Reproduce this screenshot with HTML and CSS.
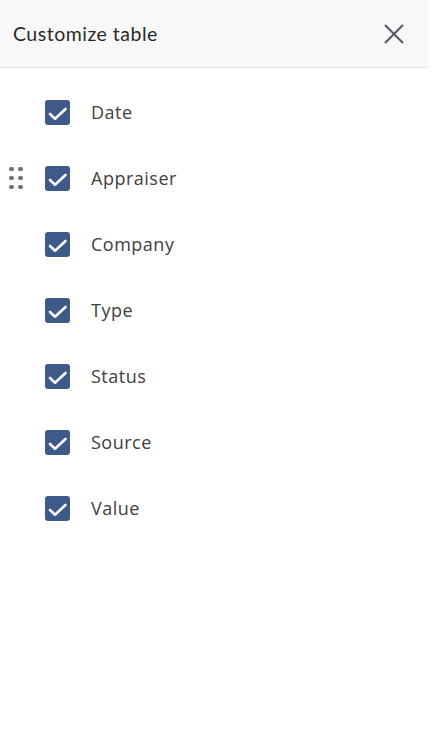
FILE: index.html
```html
<!DOCTYPE html>
<html lang="en">
<head>
    <meta charset="UTF-8">
    <meta name="viewport" content="width=device-width, initial-scale=1.0">
    <title>Customize table</title>
    <link rel="stylesheet" href="styles.css">
</head>
<body>
    <div class="panel">
        <div class="panel-header">
            <h1 class="panel-title">Customize table</h1>
            <button class="close-btn" aria-label="Close">
                <svg width="20" height="20" viewBox="0 0 20 20">
                    <path d="M1 1 L19 19 M19 1 L1 19" stroke="#5b5266" stroke-width="2" fill="none"/>
                </svg>
            </button>
        </div>

        <ul class="columns">
            <li class="column-item">
                <span class="drag"></span>
                <span class="check"><svg viewBox="0 0 25 25"><path d="M5 14 L10 18.7 L20.5 9" stroke="#fff" stroke-width="2.6" fill="none" stroke-linecap="round" stroke-linejoin="round"/></svg></span>
                <span class="label">Date</span>
            </li>
            <li class="column-item">
                <span class="drag visible">
                    <i></i><i></i><i></i><i></i><i></i><i></i>
                </span>
                <span class="check"><svg viewBox="0 0 25 25"><path d="M5 14 L10 18.7 L20.5 9" stroke="#fff" stroke-width="2.6" fill="none" stroke-linecap="round" stroke-linejoin="round"/></svg></span>
                <span class="label">Appraiser</span>
            </li>
            <li class="column-item">
                <span class="drag"></span>
                <span class="check"><svg viewBox="0 0 25 25"><path d="M5 14 L10 18.7 L20.5 9" stroke="#fff" stroke-width="2.6" fill="none" stroke-linecap="round" stroke-linejoin="round"/></svg></span>
                <span class="label">Company</span>
            </li>
            <li class="column-item">
                <span class="drag"></span>
                <span class="check"><svg viewBox="0 0 25 25"><path d="M5 14 L10 18.7 L20.5 9" stroke="#fff" stroke-width="2.6" fill="none" stroke-linecap="round" stroke-linejoin="round"/></svg></span>
                <span class="label">Type</span>
            </li>
            <li class="column-item">
                <span class="drag"></span>
                <span class="check"><svg viewBox="0 0 25 25"><path d="M5 14 L10 18.7 L20.5 9" stroke="#fff" stroke-width="2.6" fill="none" stroke-linecap="round" stroke-linejoin="round"/></svg></span>
                <span class="label">Status</span>
            </li>
            <li class="column-item">
                <span class="drag"></span>
                <span class="check"><svg viewBox="0 0 25 25"><path d="M5 14 L10 18.7 L20.5 9" stroke="#fff" stroke-width="2.6" fill="none" stroke-linecap="round" stroke-linejoin="round"/></svg></span>
                <span class="label">Source</span>
            </li>
            <li class="column-item">
                <span class="drag"></span>
                <span class="check"><svg viewBox="0 0 25 25"><path d="M5 14 L10 18.7 L20.5 9" stroke="#fff" stroke-width="2.6" fill="none" stroke-linecap="round" stroke-linejoin="round"/></svg></span>
                <span class="label">Value</span>
            </li>
        </ul>
    </div>
</body>
</html>
```

FILE: styles.css
```css
body {
    margin: 0;
    background: #fff;
    font-family: 'Open Sans', sans-serif;
}
.panel {
    width: 428px;
}
.panel-header {
    height: 67px;
    background-color: #f8f8f8;
    border-bottom: 1px solid #e2e2e2;
    display: flex;
    justify-content: space-between;
    align-items: center;
    padding: 0 24px 0 13px;
}
.panel-title {
    margin: 0;
    font-family: 'Lato', sans-serif;
    font-weight: 400;
    font-size: 19.5px;
    letter-spacing: 0.5px;
    color: #2a2a2a;
}
.close-btn {
    background: none;
    border: none;
    padding: 0;
    cursor: pointer;
    display: flex;
}
.columns {
    list-style: none;
    margin: 0;
    padding: 11px 0 0 0;
}
.column-item {
    height: 66px;
    display: flex;
    align-items: center;
}
.drag {
    width: 14px;
    margin: 0 22px 0 9px;
    display: grid;
    grid-template-columns: 4px 4px;
    column-gap: 5px;
    row-gap: 4.5px;
    visibility: hidden;
}
.drag.visible {
    visibility: visible;
}
.drag i {
    width: 4.5px;
    height: 4.5px;
    border-radius: 50%;
    background: #707070;
}
.check {
    width: 25px;
    height: 25px;
    border-radius: 3px;
    background-color: #3d5a89;
    display: flex;
}
.check svg {
    width: 25px;
    height: 25px;
}
.label {
    margin-left: 21px;
    font-size: 18px;
    letter-spacing: 0.5px;
    color: #404040;
}
```
